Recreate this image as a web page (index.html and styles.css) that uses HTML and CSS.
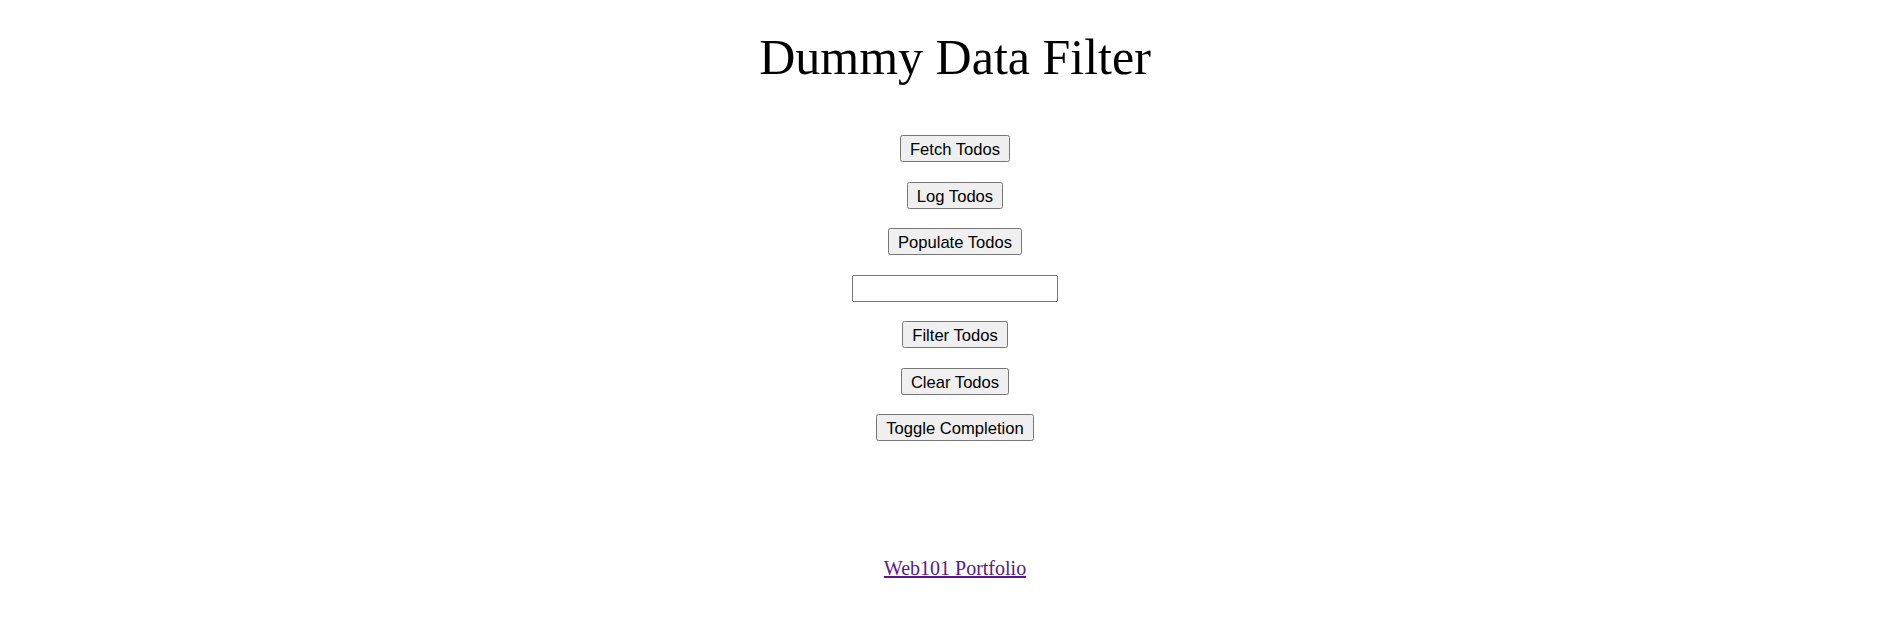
FILE: index.html
```html
<!DOCTYPE html>
<html lang="en">
<head>
<meta charset="utf-8">
<title>Dummy Data Filter</title>
<link rel="stylesheet" href="styles.css">
</head>
<body>
<h1 class="title">Dummy Data Filter</h1>
<main class="controls">
  <button class="btn" type="button">Fetch Todos</button>
  <button class="btn" type="button">Log Todos</button>
  <button class="btn" type="button">Populate Todos</button>
  <input class="filter-input" type="text">
  <button class="btn" type="button">Filter Todos</button>
  <button class="btn" type="button">Clear Todos</button>
  <button class="btn" type="button">Toggle Completion</button>
</main>
<ul class="todo-list"></ul>
<footer class="footer">
  <a class="footer-link" href="#">Web101 Portfolio</a>
</footer>
</body>
</html>
```
FILE: styles.css
```css
html, body {
  background: #fff;
}
body {
  margin: 8px 0 8px 16px;
  font-family: "Liberation Serif", "Times New Roman", serif;
  color: #000;
  text-align: center;
}
.title {
  font-size: 50px;
  font-weight: normal;
  margin: 20px 0 49px;
}
.controls {
  display: flex;
  flex-direction: column;
  align-items: center;
  gap: 19.5px;
}
.btn {
  font-family: "Liberation Sans", Arial, sans-serif;
  font-size: 16.6px;
  padding: 3px 8px;
  height: 27px;
}
.filter-input {
  font-family: "Liberation Sans", Arial, sans-serif;
  font-size: 16px;
  width: 206px;
  height: 27px;
  box-sizing: border-box;
}
.todo-list {
  margin: 0;
  padding: 0;
  height: 116px;
}
.footer {
  font-size: 20px;
}
.footer-link {
  color: #551a8b;
}
```
